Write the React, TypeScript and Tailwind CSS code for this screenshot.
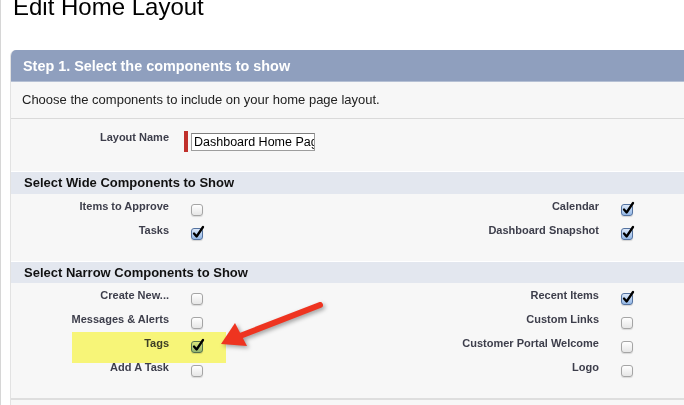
const labelCls = "text-[11px] font-bold text-[#3d3e4b] text-right leading-[24px] whitespace-nowrap";

function Box({ checked }: { checked?: boolean }) {
  return (
    <span
      className={
        checked
          ? "relative block w-[12px] h-[12px] rounded-[3px] border border-[#54729f] bg-linear-to-b from-[#dbe8f9] to-[#93b7e6] shadow-[0_1px_1px_rgba(0,0,0,0.15)]"
          : "relative block w-[12px] h-[12px] rounded-[3px] border border-[#a5a5a5] bg-linear-to-b from-white to-[#e6e6e6] shadow-[0_1px_1px_rgba(0,0,0,0.12)]"
      }
    >
      {checked && (
        <svg className="absolute -top-[4px] -left-[1px]" width="15" height="15" viewBox="0 0 15 15">
          <path d="M3 8.5 L5.6 11.5 L12 2" fill="none" stroke="#000" strokeWidth="2.3" strokeLinecap="round" strokeLinejoin="round" />
        </svg>
      )}
    </span>
  );
}

type Row = [string, boolean, string?, boolean?];

function Rows({ rows }: { rows: Row[] }) {
  return (
    <div className="pb-[19px]">
      {rows.map(([l, lc, r, rc]) => (
        <div key={l} className="flex h-[24px]">
          <div className={`w-[158px] ${labelCls}`}>{l}</div>
          <div className="w-[215px] pl-[22px] pt-[10px]">
            <Box checked={lc} />
          </div>
          <div className={`w-[215px] ${labelCls}`}>{r}</div>
          {r && (
            <div className="pl-[22px] pt-[10px]">
              <Box checked={rc} />
            </div>
          )}
        </div>
      ))}
    </div>
  );
}

export default function App() {
  return (
    <div className="relative w-[684px] h-[405px] overflow-hidden bg-white flex font-['Liberation_Sans',Arial,sans-serif]">
      {/* cut-off sidebar */}
      <div className="w-[3px] h-full border-r border-[#d6d6d6] flex flex-col">
        <div className="h-[41px] border-b border-[#d6d6d6]" />
        <div className="h-[43px] border-b border-[#d6d6d6]" />
        <div className="h-[45px] border-b border-[#d6d6d6]" />
      </div>

      <div className="flex-1 pl-[9px]">
        <div className="h-[50px]">
          <h1 className="ml-[3px] text-[24px] leading-[14px] text-black whitespace-nowrap">Edit Home Layout</h1>
        </div>

        <div className="w-[700px] rounded-tl-[6px] overflow-hidden border-l border-[#e2e2e2] bg-[#f7f7f7]">
          <div className="h-[32px] bg-[#8f9fbe] border-b border-[#b5c0d4] pl-[12px] text-[14.4px] font-bold text-white leading-[32px]">
            Step 1. Select the components to show
          </div>

          <div className="h-[37px] border-b border-[#dadada] pl-[11px] text-[13px] text-[#222] leading-[36px]">
            Choose the components to include on your home page layout.
          </div>

          <div className="h-[52px] pt-[12px] flex items-start">
            <div className="w-[158px] text-[11px] font-bold text-[#3d3e4b] text-right leading-[12px]">Layout Name</div>
            <div className="ml-[15px] w-[4px] h-[21px] bg-[#c0302b]" />
            <input
              readOnly
              value="Dashboard Home Page"
              className="ml-[3px] mt-[2px] w-[124px] h-[18px] border border-[#9d9d9d] border-t-[#7f7f7f] bg-white pl-[2px] text-[12.5px] text-black outline-none font-['Liberation_Sans',Arial,sans-serif]"
            />
          </div>

          <div className="border-t border-white bg-[#e3e7ef] pl-[13px] text-[13px] font-bold text-[#111] leading-[22px]">
            Select Wide Components to Show
          </div>
          <Rows
            rows={[
              ["Items to Approve", false, "Calendar", true],
              ["Tasks", true, "Dashboard Snapshot", true],
            ]}
          />

          <div className="border-t border-white bg-[#e3e7ef] pl-[13px] text-[13px] font-bold text-[#111] leading-[21px]">
            Select Narrow Components to Show
          </div>
          <Rows
            rows={[
              ["Create New...", false, "Recent Items", true],
              ["Messages & Alerts", false, "Custom Links", false],
              ["Tags", true, "Customer Portal Welcome", false],
              ["Add A Task", false, "Logo", false],
            ]}
          />

          <div className="h-[10px] border-t-[2px] border-[#dedede]" />
        </div>
      </div>

      {/* annotation: highlight */}
      <div className="absolute left-[72px] top-[332px] w-[154px] h-[31px] bg-[#fffd7c] mix-blend-multiply" />

      {/* annotation: arrow */}
      <svg className="absolute left-0 top-0 drop-shadow-[2px_2px_2px_rgba(0,0,0,0.35)]" width="684" height="405" viewBox="0 0 684 405">
        <line x1="320" y1="305" x2="240" y2="336" stroke="#ee3420" strokeWidth="6" strokeLinecap="round" />
        <polygon points="221,344 235,323 247,346" fill="#ee3420" />
      </svg>
    </div>
  );
}
